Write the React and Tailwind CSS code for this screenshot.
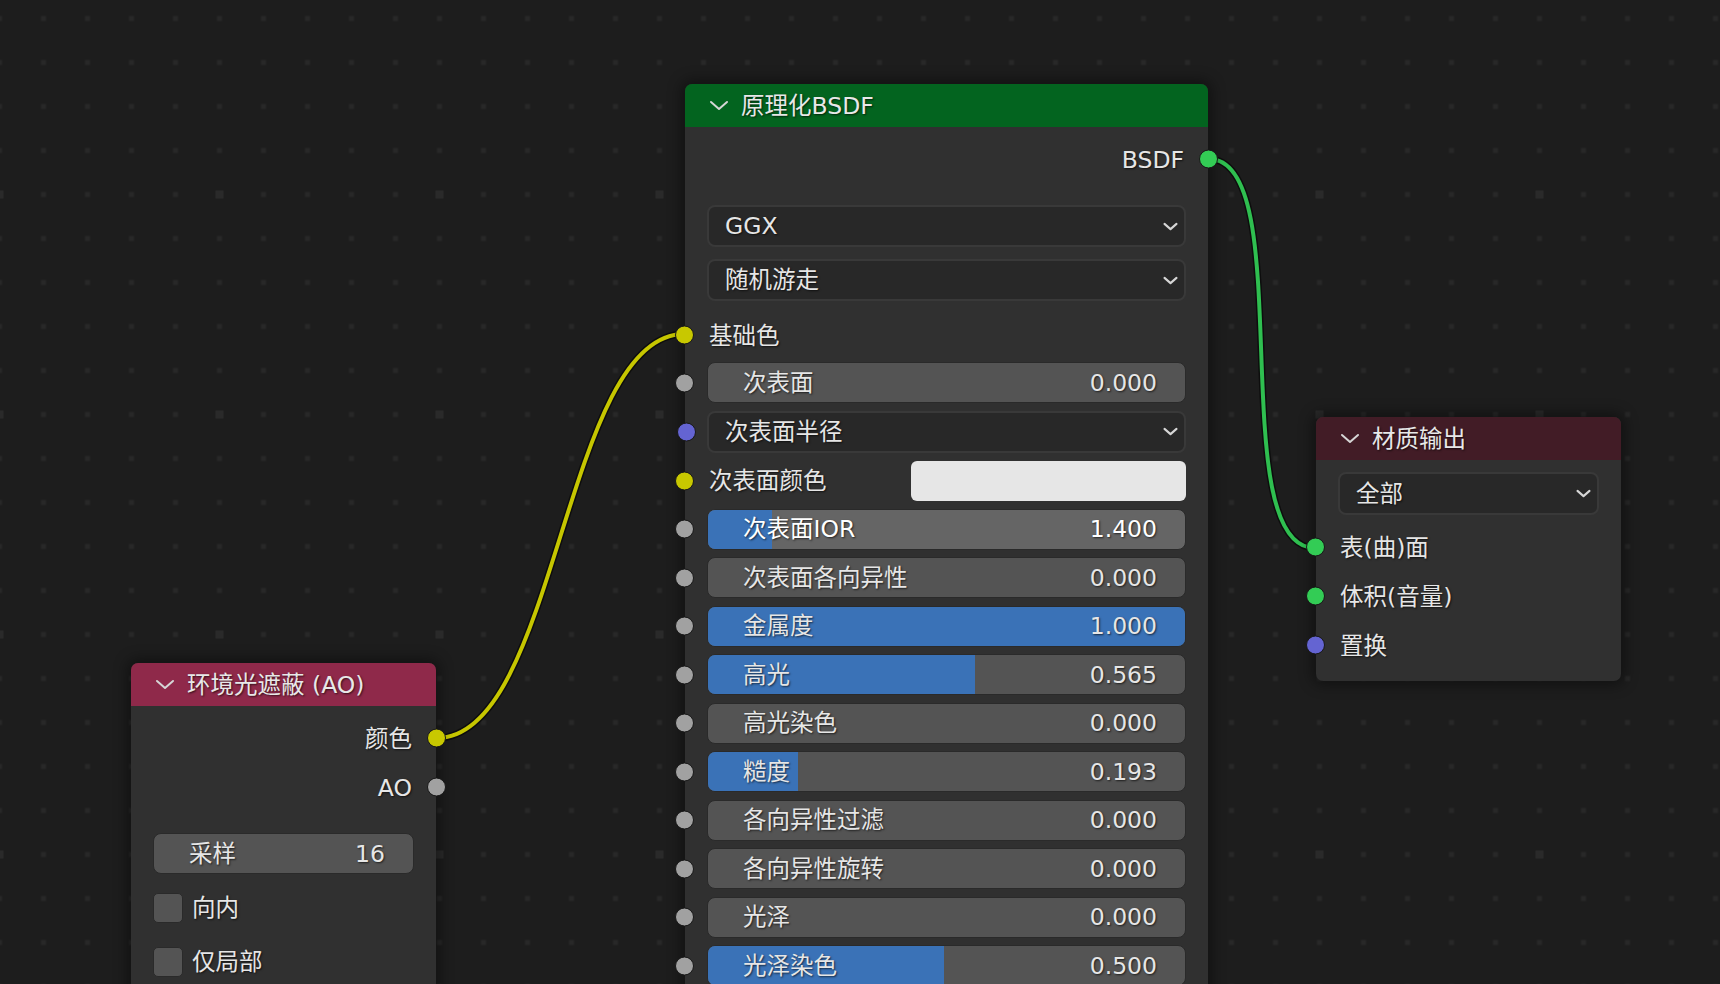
import React from "react";

// Blender-like shader node editor: Principled BSDF, AO and Material Output nodes

const FONT = "font-['DejaVu_Sans','Noto_Sans_CJK_SC',sans-serif]";
const SHADOW = "[text-shadow:1px_1px_2px_rgba(0,0,0,0.65)]";

const SOCKET = {
  gray: "bg-[#a1a1a1]",
  yellow: "bg-[#c8c800]",
  purple: "bg-[#6464d2]",
  green: "bg-[#33cc55]",
};

function Chevron({ className, width = 2 }) {
  return (
    <svg className={className} viewBox="0 0 20 11" fill="none">
      <polyline
        points="2,2 10,9 18,2"
        stroke="#d6d6d6"
        strokeWidth={width}
        strokeLinecap="round"
        strokeLinejoin="round"
      />
    </svg>
  );
}

function Socket({ color, side = "left" }) {
  const pos = side === "left" ? "left-[-32px]" : "right-[-32px]";
  return (
    <span
      className={`absolute ${pos} top-1/2 -translate-y-1/2 w-[19px] h-[19px] rounded-full border-[1.5px] border-[#181818] ${SOCKET[color]}`}
    />
  );
}

function NodeHeader({ title, bg }) {
  return (
    <div
      className={`flex items-center gap-[12px] pl-[24px] h-[43px] rounded-t-[7px] ${bg} text-[#e8e8e8] ${SHADOW}`}
    >
      <Chevron className="w-[20px] h-[11px]" />
      <span className="leading-none pt-[2px]">{title}</span>
    </div>
  );
}

function Dropdown({ label, className = "", socket }) {
  return (
    <div
      className={`relative flex items-center justify-between h-[42px] rounded-[8px] border-2 border-[#393939] bg-[#282828] pl-[16px] pr-[6px] ${className}`}
    >
      {socket && <Socket color={socket} />}
      <span className={`leading-none pt-[2px] text-[#e6e6e6] ${SHADOW}`}>{label}</span>
      <Chevron className="w-[15px] h-[9px]" width={2.8} />
    </div>
  );
}

function Slider({ label, value, fill = 0, hover, socket, className = "" }) {
  return (
    <div className={`relative h-[41px] ${className}`}>
      {socket && <Socket color={socket} />}
      <div
        className={`relative h-full overflow-hidden rounded-[8px] border border-[#2a2a2a] ${
          hover ? "bg-[#656565]" : "bg-[#545454]"
        }`}
      >
        {fill > 0 && (
          <div
            className="absolute left-0 top-0 bottom-0 bg-[#3a72b7]"
            style={{ width: `${fill * 100}%` }}
          />
        )}
        <div
          className={`relative flex h-full items-center justify-between pl-[35px] pr-[28px] pt-[2px] ${
            hover ? "text-white" : "text-[#e6e6e6]"
          } ${SHADOW}`}
        >
          <span className="leading-none">{label}</span>
          <span className="leading-none">{value}</span>
        </div>
      </div>
    </div>
  );
}

function Row({ label, socket, side = "left", className = "", children }) {
  return (
    <div
      className={`relative flex items-center h-[42px] ${
        side === "right" ? "justify-end pr-[2px]" : "pl-[2px]"
      } ${className}`}
    >
      <Socket color={socket} side={side} />
      <span className={`leading-none pt-[3px] text-[#e6e6e6] ${SHADOW}`}>{label}</span>
      {children}
    </div>
  );
}

function Checkbox({ label, className = "" }) {
  return (
    <div className={`flex items-center gap-[9px] h-[42px] ${className}`}>
      <span className="w-[30px] h-[30px] rounded-[5px] bg-[#545454] border border-[#2a2a2a]" />
      <span className={`leading-none pt-[2px] text-[#e6e6e6] ${SHADOW}`}>{label}</span>
    </div>
  );
}

const bsdfInputs = [
  { type: "slider", label: "次表面", value: "0.000" },
  { type: "dropdown", label: "次表面半径", socket: "purple" },
  { type: "color", label: "次表面颜色", socket: "yellow" },
  { type: "slider", label: "次表面IOR", value: "1.400", fill: 0.134, hover: true },
  { type: "slider", label: "次表面各向异性", value: "0.000" },
  { type: "slider", label: "金属度", value: "1.000", fill: 1 },
  { type: "slider", label: "高光", value: "0.565", fill: 0.56 },
  { type: "slider", label: "高光染色", value: "0.000" },
  { type: "slider", label: "糙度", value: "0.193", fill: 0.188 },
  { type: "slider", label: "各向异性过滤", value: "0.000" },
  { type: "slider", label: "各向异性旋转", value: "0.000" },
  { type: "slider", label: "光泽", value: "0.000" },
  { type: "slider", label: "光泽染色", value: "0.500", fill: 0.495 },
];

function PrincipledNode() {
  return (
    <div className="absolute left-[685px] top-[84px] w-[523px] rounded-[7px] bg-[#303030] shadow-[0_0_14px_4px_rgba(0,0,0,0.4)] pb-[40px]">
      <NodeHeader title="原理化BSDF" bg="bg-[#03641f]" />
      <div className="flex flex-col px-[22px] pt-[11px]">
        <Row label="BSDF" socket="green" side="right" />
        <Dropdown label="GGX" className="mt-[25px]" />
        <Dropdown label="随机游走" className="mt-[12px]" />
        <Row label="基础色" socket="yellow" className="mt-[13px]" />
        <div className="mt-[6px] flex flex-col gap-[7.5px]">
          {bsdfInputs.map((it) => {
            if (it.type === "dropdown") {
              return <Dropdown key={it.label} label={it.label} socket={it.socket} />;
            }
            if (it.type === "color") {
              return (
                <Row key={it.label} label={it.label} socket={it.socket} className="!h-[41px] justify-between">
                  <span className="w-[275px] h-[40px] rounded-[6px] bg-[#e6e6e6]" />
                </Row>
              );
            }
            return (
              <Slider
                key={it.label}
                label={it.label}
                value={it.value}
                fill={it.fill}
                hover={it.hover}
                socket="gray"
              />
            );
          })}
        </div>
      </div>
    </div>
  );
}

function AONode() {
  return (
    <div className="absolute left-[131px] top-[663px] w-[305px] rounded-[7px] bg-[#303030] shadow-[0_0_14px_4px_rgba(0,0,0,0.4)] pb-[40px]">
      <NodeHeader title="环境光遮蔽 (AO)" bg="bg-[#8f294a]" />
      <div className="flex flex-col px-[22px] pt-[11px]">
        <Row label="颜色" socket="yellow" side="right" />
        <Row label="AO" socket="gray" side="right" className="mt-[7px]" />
        <Slider label="采样" value="16" className="mt-[25px]" />
        <Checkbox label="向内" className="mt-[13px]" />
        <Checkbox label="仅局部" className="mt-[12px]" />
      </div>
    </div>
  );
}

function OutputNode() {
  return (
    <div className="absolute left-[1316px] top-[417px] w-[305px] rounded-[7px] bg-[#303030] shadow-[0_0_14px_4px_rgba(0,0,0,0.4)]">
      <NodeHeader title="材质输出" bg="bg-[#421c26]" />
      <div className="flex flex-col px-[22px] pt-[12px] pb-[15px]">
        <Dropdown label="全部" className="!h-[43px]" />
        <Row label="表(曲)面" socket="green" className="mt-[11px]" />
        <Row label="体积(音量)" socket="green" className="mt-[7px]" />
        <Row label="置换" socket="purple" className="mt-[7px]" />
      </div>
    </div>
  );
}

// canvas grid + noodles, drawn behind the nodes
function Canvas() {
  const small = [];
  for (let i = 0; i < 5; i++) {
    for (let j = 0; j < 5; j++) {
      if (i === 0 && j === 0) continue;
      small.push(
        <rect key={`${i}-${j}`} x={19.5 + 44 * i} y={19.5 + 44 * j} width="5" height="5" fill="#282828" />
      );
    }
  }
  return (
    <svg className="absolute inset-0" width="1720" height="984">
      <defs>
        <pattern id="grid" x="-22.5" y="-47.5" width="220" height="220" patternUnits="userSpaceOnUse">
          {small}
          <rect x="18" y="18" width="8" height="8" fill="#2a2a2a" />
        </pattern>
      </defs>
      <rect width="1720" height="984" fill="#1d1d1d" />
      <rect width="1720" height="984" fill="url(#grid)" />
      <g fill="none" strokeLinecap="round">
        <path d="M437 738 C557 738 564 334 684 334" stroke="rgba(0,0,0,0.55)" strokeWidth="7" />
        <path d="M437 738 C557 738 564 334 684 334" stroke="#c6c600" strokeWidth="4" />
        <path d="M1209 159 C1300 159 1222 548 1315 548" stroke="rgba(0,0,0,0.55)" strokeWidth="7" />
        <path d="M1209 159 C1300 159 1222 548 1315 548" stroke="#2fbf50" strokeWidth="4" />
      </g>
    </svg>
  );
}

export default function App() {
  return (
    <div className={`relative w-[1720px] h-[984px] overflow-hidden bg-[#1d1d1d] text-[23.5px] ${FONT}`}>
      <Canvas />
      <AONode />
      <PrincipledNode />
      <OutputNode />
    </div>
  );
}
